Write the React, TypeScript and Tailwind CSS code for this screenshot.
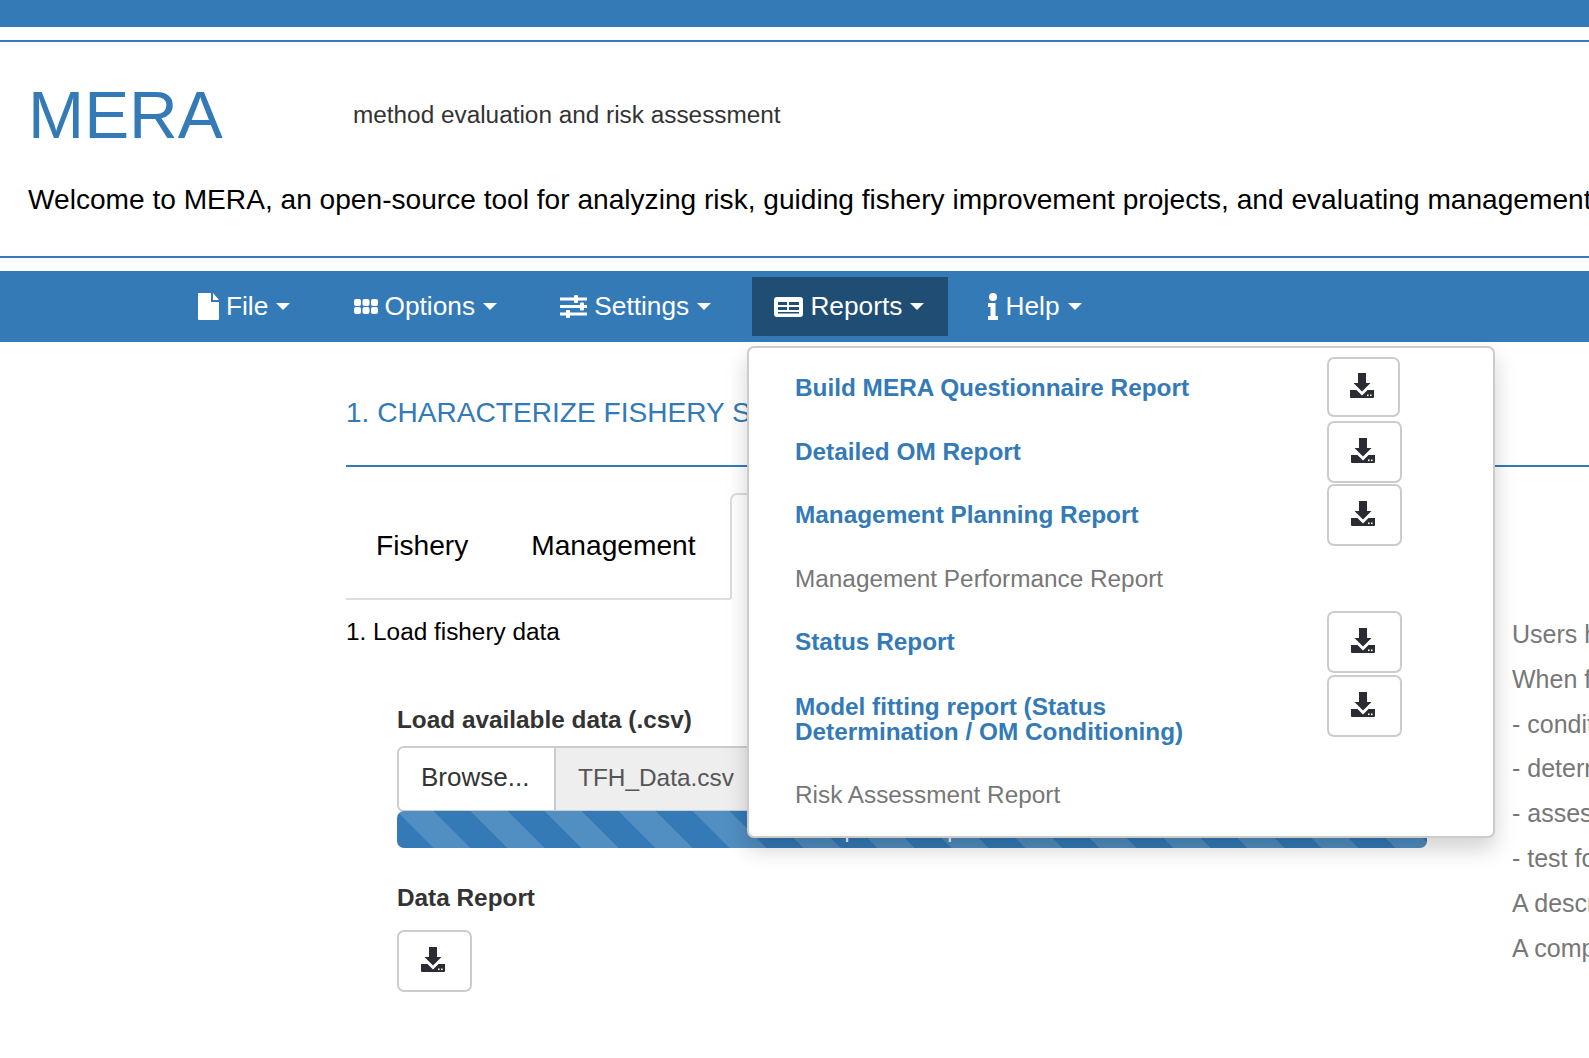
import React from 'react';

const Caret = () => (
    <span className="inline-block w-0 h-0 ml-2 border-x-[7px] border-x-transparent border-t-[7px] border-t-white" />
);

const FileIcon = () => (
    <svg width="21" height="27" viewBox="0 0 21 27" fill="white">
        <path d="M1 0h12v9h8v17a1 1 0 0 1-1 1H1a1 1 0 0 1-1-1V1a1 1 0 0 1 1-1z" />
        <path d="M15 0l6 7h-6z" />
    </svg>
);

const GridIcon = () => (
    <svg width="24" height="15" viewBox="0 0 24 15" fill="white">
        <rect x="0" y="0" width="7" height="7" rx="2" />
        <rect x="8.5" y="0" width="7" height="7" rx="2" />
        <rect x="17" y="0" width="7" height="7" rx="2" />
        <rect x="0" y="8" width="7" height="7" rx="2" />
        <rect x="8.5" y="8" width="7" height="7" rx="2" />
        <rect x="17" y="8" width="7" height="7" rx="2" />
    </svg>
);

const SlidersIcon = () => (
    <svg width="27" height="23" viewBox="0 0 27 23" fill="white">
        <rect x="0" y="2.5" width="27" height="3" />
        <rect x="14" y="0" width="4" height="8" rx="1" />
        <rect x="0" y="10" width="27" height="3" />
        <rect x="20" y="7.5" width="4" height="8" rx="1" />
        <rect x="0" y="17.5" width="27" height="3" />
        <rect x="6" y="15" width="4" height="8" rx="1" />
    </svg>
);

const ReportIcon = () => (
    <svg width="29" height="20" viewBox="0 0 29 20">
        <rect x="0" y="0" width="29" height="20" rx="3" fill="white" />
        <rect x="4" y="5" width="9" height="3" fill="#204d74" />
        <rect x="15" y="5" width="10" height="3" fill="#204d74" />
        <rect x="4" y="10" width="9" height="3" fill="#204d74" />
        <rect x="15" y="10" width="10" height="3" fill="#204d74" />
        <rect x="4" y="15" width="21" height="1.5" fill="#204d74" />
    </svg>
);

const InfoIcon = () => (
    <svg width="11" height="27" viewBox="0 0 11 27" fill="white">
        <circle cx="5" cy="4" r="4" />
        <path d="M0 10h7.5v13H10v4H0v-4h2.5v-9H0z" />
    </svg>
);

const DownloadIcon = () => (
    <svg width="24" height="25" viewBox="0 0 24 25" fill="#2b2b33">
        <path d="M8 0h8v10h4.5L12 18.5 3.5 10H8z" />
        <path d="M0 17h6.5l5.5 5.5 5.5-5.5H24v7a1 1 0 0 1-1 1H1a1 1 0 0 1-1-1z" />
        <rect x="17" y="21.5" width="1.6" height="1.6" fill="white" />
        <rect x="20" y="21.5" width="1.6" height="1.6" fill="white" />
    </svg>
);

const DownloadButton = ({ className }: { className: string }) => (
    <button className={`flex items-center justify-center pr-[3px] pb-[3px] bg-white border-2 border-[#ccc] rounded-[7px] ${className}`}>
        <DownloadIcon />
    </button>
);

const NavItem = ({ icon, label, active }: { icon: React.ReactNode; label: string; active?: boolean }) => (
    <div className={`flex items-center h-[59px] pl-[22px] gap-[7px] text-white text-[26.25px] ${active ? 'pr-[24px] -mr-[2px] bg-[#204d74]' : 'pr-[22px]'}`}>
        {icon}
        <span className="flex items-center">
            {label}
            <Caret />
        </span>
    </div>
);

const reportRows = [
    { label: 'Build MERA Questionnaire Report', button: 'w-[73px] h-[60px]', height: 'h-[63.5px]', pad: 'pt-[18px]' },
    { label: 'Detailed OM Report', button: 'w-[75px] h-[62px]', height: 'h-[63.5px]', pad: 'pt-[18px]' },
    { label: 'Management Planning Report', button: 'w-[75px] h-[62px]', height: 'h-[63.5px]', pad: 'pt-[18px]' },
    { label: 'Management Performance Report', height: 'h-[63.5px]', pad: 'pt-[18px]' },
    { label: 'Status Report', button: 'w-[75px] h-[62px]', height: 'h-[63.5px]', pad: 'pt-[18px]' },
    { label: 'Model fitting report (Status\nDetermination / OM Conditioning)', button: 'w-[75px] h-[62px]', height: 'h-[89px]', pad: 'pt-[19px]' },
    { label: 'Risk Assessment Report', height: 'h-[63.5px]', pad: 'pt-[18px]' },
];

const ReportsMenu = () => (
    <div className="absolute left-[747px] top-[346px] w-[748px] h-[492px] pt-[9px] bg-white border-2 border-[#ccc] rounded-[7px] shadow-[0_11px_22px_rgba(0,0,0,0.18)]">
        {reportRows.map((row) => (
            <div key={row.label} className={`flex pl-[46px] ${row.height}`}>
                <div
                    className={`w-[532px] text-[24.35px] leading-[25.5px] whitespace-pre-line ${row.pad} ${row.button ? 'font-bold text-[#337ab7]' : 'text-[#777]'}`}
                >
                    {row.label}
                </div>
                {row.button && <DownloadButton className={row.button} />}
            </div>
        ))}
    </div>
);

const notes = ['Users have', 'When fitting', '- conditioning', '- determining', '- assessing', '- test for', 'A description', 'A complete'];

export default function App() {
    return (
        <div className="relative w-[1589px] h-[1058px] overflow-hidden bg-white font-['Liberation_Sans',Arial,sans-serif]">
            <div className="h-[27px] bg-[#337ab7]" />
            <div className="mt-[13px] h-[2px] bg-[#337ab7]" />

            <div className="pl-[28px] whitespace-nowrap">
                <div className="flex items-center h-[138px] mt-[4px]">
                    <h1 className="w-[325px] text-[67.4px] leading-none text-[#337ab7]">MERA</h1>
                    <span className="text-[24.35px] text-[#333]">method evaluation and risk assessment</span>
                </div>
                <p className="text-[28.12px] leading-[32px] text-black">
                    Welcome to MERA, an open-source tool for analyzing risk, guiding fishery improvement projects, and evaluating management
                </p>
            </div>
            <div className="mt-[40px] h-[2px] bg-[#337ab7]" />

            <nav className="flex items-start gap-[19.25px] mt-[13px] h-[71px] pt-[6px] pl-[176px] bg-[#337ab7]">
                <NavItem icon={<FileIcon />} label="File" />
                <NavItem icon={<GridIcon />} label="Options" />
                <NavItem icon={<SlidersIcon />} label="Settings" />
                <NavItem icon={<ReportIcon />} label="Reports" active />
                <NavItem icon={<InfoIcon />} label="Help" />
            </nav>

            <main className="pl-[346px] pt-[53px]">
                <h2 className="text-[28.1px] leading-[36px] text-[#337ab7] whitespace-nowrap">1. CHARACTERIZE FISHERY SYSTEM</h2>
                <div className="mt-[34px] h-[2px] bg-[#337ab7]" />

                <div className="flex mt-[26px]">
                    <div className="w-[1166px] mr-[85px]">
                        <div className="flex h-[107px] border-b-2 border-[#ddd]">
                            <div className="flex items-center gap-[63px] w-[384px] pl-[30px] pt-[1px] text-[28.15px] text-black">
                                <span>Fishery</span>
                                <span>Management</span>
                            </div>
                            <div className="flex-1 mb-[-2px] border-2 border-b-white border-[#ddd] rounded-t-[7px]" />
                        </div>
                        <p className="mt-[16px] text-[24.35px] leading-[32px] text-black">1. Load fishery data</p>

                        <div className="pl-[51px] w-[1081px]">
                            <label className="block mt-[56px] text-[24.35px] leading-[32px] font-bold text-[#333]">Load available data (.csv)</label>
                            <div className="flex h-[66px] mt-[10px] border-2 border-[#ccc] rounded-[7px] overflow-hidden">
                                <div className="flex items-center w-[157px] pl-[22px] pb-[3px] bg-white border-r-2 border-[#ccc] text-[26px] text-[#333]">Browse...</div>
                                <div className="flex items-center flex-1 pl-[22px] pb-[2px] bg-[#eee] text-[24.4px] text-[#555]">TFH_Data.csv</div>
                            </div>
                            <div className="flex items-start justify-center h-[37px] -mt-px rounded-[7px] bg-[#337ab7] bg-[linear-gradient(45deg,rgba(255,255,255,0.15)_25%,transparent_25%,transparent_50%,rgba(255,255,255,0.15)_50%,rgba(255,255,255,0.15)_75%,transparent_75%,transparent)] bg-[length:74px_74px] text-[22.3px] leading-[37px] text-white">
                                Upload complete
                            </div>
                            <label className="block mt-[34px] text-[24.35px] leading-[32px] font-bold text-[#333]">Data Report</label>
                            <DownloadButton className="w-[75px] h-[62px] mt-[16px]" />
                        </div>
                    </div>

                    <div className="pt-[119px] text-[25px] leading-[44.8px] text-[#777] whitespace-nowrap">
                        {notes.map((note) => (
                            <div key={note}>{note}</div>
                        ))}
                    </div>
                </div>
            </main>

            <ReportsMenu />
        </div>
    );
}
